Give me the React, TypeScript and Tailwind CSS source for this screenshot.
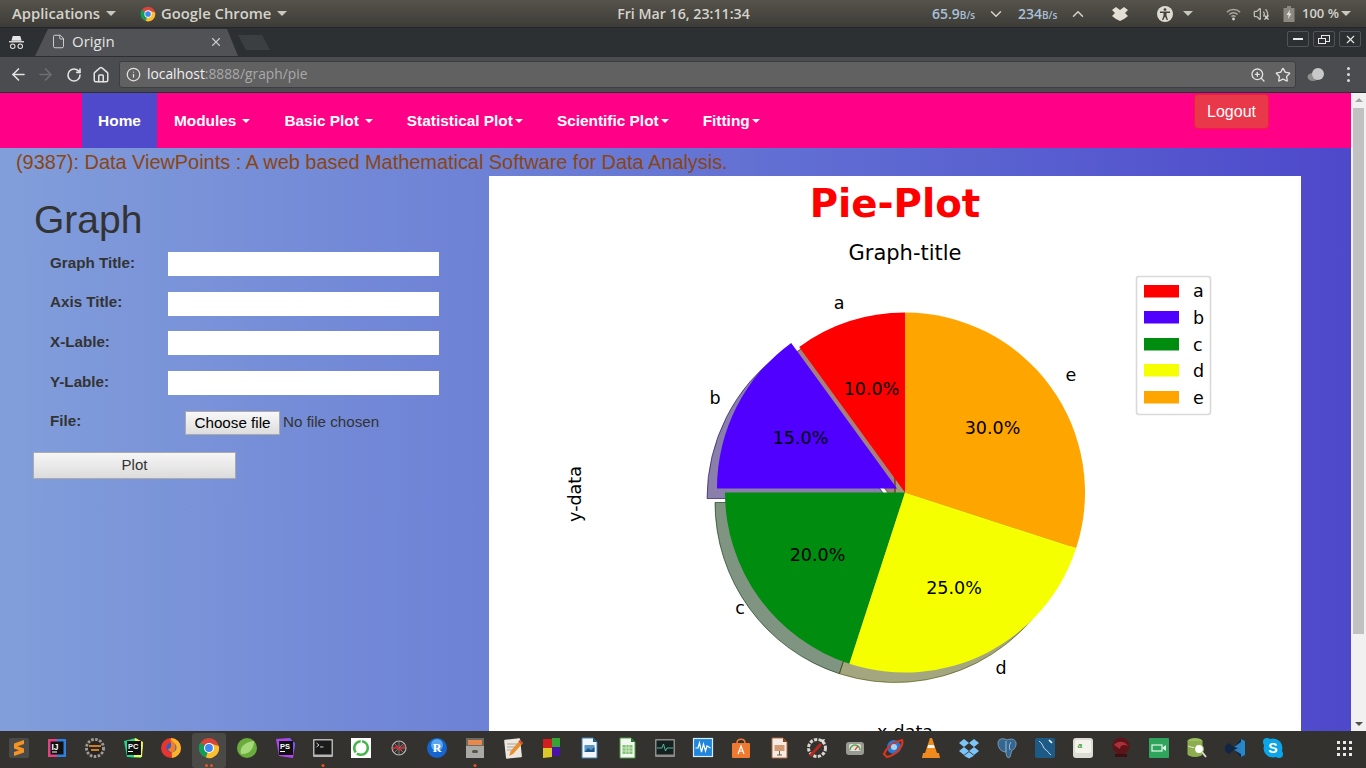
import type { ReactNode } from "react";
import { ArrowLeft, ArrowRight, ChevronDown, ChevronUp, File, Home, Info, RotateCw, Star, Volume2, X, ZoomIn } from "lucide-react";

const navItems = [
	{ label: "Modules", caret: "ml-[6px]" },
	{ label: "Basic Plot", caret: "ml-[6px]" },
	{ label: "Statistical Plot", caret: "ml-[2px]" },
	{ label: "Scientific Plot", caret: "ml-[2px]" },
	{ label: "Fitting", caret: "ml-[2px]" },
];

const formRows = ["Graph Title:", "Axis Title:", "X-Lable:", "Y-Lable:"];

const slices = [
	{ name: "a", color: "#ff0000", from: 90, to: 126, cx: 905, cy: 492.5 },
	{ name: "b", color: "#5000ff", from: 126, to: 180, cx: 897, cy: 488.5 },
	{ name: "c", color: "#008c0e", from: 180, to: 252, cx: 905, cy: 492.5 },
	{ name: "d", color: "#f6ff00", from: 252, to: 342, cx: 905, cy: 492.5 },
	{ name: "e", color: "#ffa500", from: 342, to: 450, cx: 905, cy: 492.5 },
];

const shadows: Record<string, string> = {
	a: "#4d0000",
	b: "#140055",
	c: "#002a04",
	d: "#4a4d00",
	e: "#4d3200",
};

const outerLabels = [
	{ t: "a", x: 839, y: 303 },
	{ t: "b", x: 715, y: 398 },
	{ t: "c", x: 740, y: 608 },
	{ t: "d", x: 1001, y: 668 },
	{ t: "e", x: 1071, y: 375 },
];

const percentLabels = [
	{ t: "10.0%", x: 871.5, y: 389 },
	{ t: "15.0%", x: 800.5, y: 438 },
	{ t: "20.0%", x: 817.5, y: 555 },
	{ t: "25.0%", x: 954, y: 588 },
	{ t: "30.0%", x: 992.5, y: 428 },
];

const legendRows = [
	{ t: "a", color: "#ff0000", y: 285, ty: 291 },
	{ t: "b", color: "#5000ff", y: 311, ty: 318 },
	{ t: "c", color: "#008c0e", y: 338, ty: 345 },
	{ t: "d", color: "#f6ff00", y: 364, ty: 371 },
	{ t: "e", color: "#ffa500", y: 391, ty: 398 },
];

function wedge(cx: number, cy: number, r: number, from: number, to: number) {
	const a = (from * Math.PI) / 180;
	const b = (to * Math.PI) / 180;
	const large = to - from > 180 ? 1 : 0;
	return `M${cx} ${cy}L${cx + r * Math.cos(a)} ${cy - r * Math.sin(a)}A${r} ${r} 0 ${large} 0 ${cx + r * Math.cos(b)} ${cy - r * Math.sin(b)}Z`;
}

const PieChart = () => (
	<svg viewBox="489 230 812 510" width={812} height={510} className="block font-['DejaVu_Sans',sans-serif]">
		<text x={905} y={253} textAnchor="middle" dominantBaseline="central" fontSize={21}>
			Graph-title
		</text>
		{slices.map((s) => (
			<path key={s.name} d={wedge(s.cx - 10, s.cy + 10, 180, s.from, s.to)} fill={shadows[s.name]} stroke={shadows[s.name]} fillOpacity={0.5} strokeOpacity={0.6} />
		))}
		{slices.map((s) => (
			<path key={s.name} d={wedge(s.cx, s.cy, 180, s.from, s.to)} fill={s.color} />
		))}
		{[...outerLabels, ...percentLabels].map((l) => (
			<text key={l.t} x={l.x} y={l.y} textAnchor="middle" dominantBaseline="central" fontSize={17.5}>
				{l.t}
			</text>
		))}
		<text x={575} y={494} textAnchor="middle" dominantBaseline="central" fontSize={17.5} transform="rotate(-90 575 494)">
			y-data
		</text>
		<text x={905} y={732} textAnchor="middle" dominantBaseline="central" fontSize={17.5}>
			x-data
		</text>
		<rect x={1136.5} y={276.5} width={74} height={138} rx={2.5} fill="#fff" stroke="#d9d9d9" strokeWidth={1.6} />
		{legendRows.map((l) => (
			<g key={l.t}>
				<rect x={1144} y={l.y} width={35} height={12.5} fill={l.color} />
				<text x={1193} y={l.ty} dominantBaseline="central" fontSize={17.5}>
					{l.t}
				</text>
			</g>
		))}
	</svg>
);

const ChromeLogo = ({ size }: { size: number }) => (
	<svg viewBox="0 0 22 22" width={size} height={size}>
		<circle cx={11} cy={11} r={10} fill="#db4437" />
		<path d="M11 11L2.3 6A10 10 0 0 0 8 20.5Z" fill="#0f9d58" />
		<path d="M11 11L8 20.6A10 10 0 0 0 20.8 8.9L11 6Z" fill="#fbc02d" />
		<path d="M11 11L2.3 16A10 10 0 0 1 2.3 6Z" fill="#0f9d58" />
		<circle cx={11} cy={11} r={5} fill="#fff" />
		<circle cx={11} cy={11} r={3.9} fill="#4285f4" />
	</svg>
);

const Caret = ({ className }: { className: string }) => (
	<span className={`inline-block h-0 w-0 border-x-[5px] border-t-[5px] border-x-transparent ${className}`} />
);

const TopBar = () => (
	<div className="flex h-[27px] shrink-0 items-center bg-gradient-to-b from-[#55534b] to-[#3d3c37] font-['Open_Sans',sans-serif] text-[14.8px] font-semibold text-[#d5d3cc]">
		<div className="flex flex-1 items-center pl-3">
			<span>Applications</span>
			<Caret className="ml-[6px] border-t-[#c9c7c0]" />
			<span className="ml-[24px] flex items-center">
				<ChromeLogo size={16} />
			</span>
			<span className="ml-[5px]">Google Chrome</span>
			<Caret className="ml-[6px] border-t-[#c9c7c0]" />
		</div>
		<span className="ml-[4px] text-[14.2px]">Fri Mar 16, 23:11:34</span>
		<div className="flex flex-1 items-center justify-end pr-[15px]">
			<span className="w-[43px] text-[14px] whitespace-nowrap text-[#a9c0d8]">
				65.9<span className="text-[10px]">B/s</span>
			</span>
			<ChevronDown size={18} className="ml-[12px] text-[#d5d3cc]" />
			<span className="ml-[13px] w-[39px] text-[14px] whitespace-nowrap text-[#a9c0d8]">
				234<span className="text-[10px]">B/s</span>
			</span>
			<ChevronUp size={18} className="ml-[12px] text-[#d5d3cc]" />
			<svg viewBox="0 0 16 14" width={16} height={14} className="ml-[25px]">
				<path d="M4 0L8 3L12 0L16 3L13 6L16 9L12 12L8 14L4 12L0 9L3 6L0 3Z" fill="#e3dfd4" />
			</svg>
			<svg viewBox="0 0 16 16" width={16} height={16} className="ml-[29px]">
				<circle cx={8} cy={8} r={8} fill="#dedbd3" />
				<circle cx={8} cy={3.6} r={1.4} fill="#45433d" />
				<path d="M3 5.5H13V7H9.5V9.5L11 14H9.7L8 10.5L6.3 14H5L6.5 9.5V7H3Z" fill="#45433d" />
			</svg>
			<Caret className="ml-[10px] border-t-[#c9c7c0]" />
			<svg viewBox="0 0 16 14" width={15} height={14} className="ml-[33px]">
				<path d="M1 5A10 10 0 0 1 15 5M3.5 7.5A6.5 6.5 0 0 1 12.5 7.5M5.8 9.8A3.2 3.2 0 0 1 10.2 9.8" fill="none" stroke="#a8a69f" strokeWidth={1.5} />
				<circle cx={8} cy={12.3} r={1.5} fill="#d5d3cc" />
			</svg>
			<span className="relative ml-[12px] flex">
				<Volume2 size={16} className="text-[#bdbbb4]" />
				<X size={7} strokeWidth={4} className="absolute bottom-[1px] right-[-1px] text-[#d5d3cc]" />
			</span>
			<svg viewBox="0 0 12 16" width={12} height={16} className="ml-[14px]">
				<path d="M4 0H8V2H11.5V16H0.5V2H4Z" fill="#8a8880" />
				<path d="M7 3.5L3.5 9H5.7L5 13L8.5 7.5H6.3Z" fill="#e8e6de" />
			</svg>
			<span className="ml-[7px] w-[39px] text-[13px] whitespace-nowrap">100 %</span>
			<Caret className="border-t-[#c9c7c0]" />
		</div>
	</div>
);

const WinButton = ({ children }: { children: ReactNode }) => (
	<span className="flex h-[16px] w-[22px] items-center justify-center rounded-[2px] border border-[#50545a] text-[#e8e8e8]">{children}</span>
);

const TabStrip = () => (
	<div className="flex h-[29px] shrink-0 items-end border-t border-[#23262a] bg-[#2d3033]">
		<span className="flex h-full w-[35px] items-center justify-center pr-[3px]">
			<svg viewBox="0 0 18 16" width={17} height={15}>
				<path d="M5 1H13L14.5 6H3.5Z" fill="#e6e6e6" />
				<rect x={1} y={6.5} width={16} height={1.4} fill="#e6e6e6" />
				<circle cx={5} cy={12} r={2.4} fill="none" stroke="#e6e6e6" strokeWidth={1.1} />
				<circle cx={13} cy={12} r={2.4} fill="none" stroke="#e6e6e6" strokeWidth={1.1} />
			</svg>
		</span>
		<div className="flex h-[27px] w-[203px] items-center bg-[#505255] pb-[2px] pl-[17px] pr-[16px] [clip-path:polygon(0_100%,13px_0,192px_0,100%_100%)]">
			<File size={15} strokeWidth={1.4} className="ml-[-1px] text-[#dedede]" />
			<span className="ml-[6px] font-['Open_Sans',sans-serif] text-[15px] text-[#e4e4e4]">Origin</span>
			<X size={14} className="ml-auto mr-[-1px] text-[#c9c9c9]" />
		</div>
		<span className="mb-[6px] h-[15px] w-[32px] bg-[#3c3f42] [clip-path:polygon(0_0,24px_0,100%_100%,8px_100%)]" />
		<div className="mb-[9px] ml-auto mr-[5px] flex gap-[4px]">
			<WinButton>
				<span className="h-[2px] w-[10px] bg-[#e8e8e8]" />
			</WinButton>
			<WinButton>
				<span className="relative block h-[9px] w-[12px]">
					<span className="absolute right-0 top-0 h-[7px] w-[9px] border border-[#e8e8e8]" />
					<span className="absolute bottom-0 left-0 h-[6px] w-[8px] border border-[#e8e8e8] bg-[#2d3033]" />
				</span>
			</WinButton>
			<WinButton>
				<X size={13} />
			</WinButton>
		</div>
	</div>
);

const Toolbar = () => (
	<div className="flex h-[37px] shrink-0 items-center border-y border-[#2c2e31] bg-[#4a4c4f] pl-[9px] pr-[16px] text-[#e2e2e2]">
		<ArrowLeft size={19} />
		<ArrowRight size={19} className="ml-[8px] text-[#6d6f72]" />
		<RotateCw size={16} className="ml-[11px]" strokeWidth={2.4} />
		<Home size={18} className="ml-[10px]" />
		<div className="ml-[9px] flex h-[27px] w-[1177px] items-center rounded-[3px] border border-[#3c3e41] bg-[#616161] pl-[6px] pr-[4px]">
			<Info size={15} />
			<span className="ml-[6px] font-['Open_Sans',sans-serif] text-[13.8px] text-[#f0f0f0]">
				localhost<span className="text-[#a9a9a9]">:8888/graph/pie</span>
			</span>
			<ZoomIn size={16} className="ml-auto" />
			<Star size={16} className="ml-[9px]" />
		</div>
		<svg viewBox="0 0 18 14" width={18} height={14} className="ml-[11px]">
			<ellipse cx={6} cy={9} rx={5.5} ry={4} fill="#8e8e8e" />
			<circle cx={11} cy={6} r={6} fill="#c8c8c8" />
		</svg>
		<span className="ml-auto flex flex-col gap-[3px]">
			<span className="h-[3px] w-[3px] rounded-full bg-[#dcdcdc]" />
			<span className="h-[3px] w-[3px] rounded-full bg-[#dcdcdc]" />
			<span className="h-[3px] w-[3px] rounded-full bg-[#dcdcdc]" />
		</span>
	</div>
);

const Navbar = () => (
	<nav className="flex h-[55px] shrink-0 bg-[#ff0086] pl-[82px] font-['Liberation_Sans',sans-serif] text-[15.4px] font-bold text-white">
		<a className="flex w-[75px] items-center justify-center bg-[#4f4acb]">Home</a>
		{navItems.map((item) => (
			<a key={item.label} className="flex items-center px-[17px]">
				{item.label}
				<Caret className={`${item.caret} !border-x-[4px] !border-t-[4px] border-t-white`} />
			</a>
		))}
		<button className="ml-auto mr-[82px] mt-px h-[35px] w-[75px] rounded-[4px] border border-[#ed1f3c] bg-[#e8384a] text-[16px] font-normal text-[#fff]">Logout</button>
	</nav>
);

const GraphForm = () => (
	<div className="w-[489px] shrink-0 font-['Liberation_Sans',sans-serif] text-[#333]">
		<h2 className="ml-[34px] h-[76px] pt-[22px] text-[39px] leading-[44px]">Graph</h2>
		<div className="flex flex-col gap-[15.67px] pl-[50px]">
			{formRows.map((label) => (
				<div key={label} className="flex h-[24px] items-center">
					<label className="w-[118px] pb-[2px] text-[15.2px] font-bold">{label}</label>
					<input className="h-full w-[271px] bg-white" />
				</div>
			))}
			<div className="flex h-[24px] items-center">
				<label className="w-[135px] pb-[2px] text-[15.2px] font-bold">File:</label>
				<button className="h-[24px] w-[95px] border border-[#aaa] bg-gradient-to-b from-[#f8f8f8] to-[#ddd] text-[15.2px] text-black">Choose file</button>
				<span className="ml-[3px] text-[15.2px]">No file chosen</span>
			</div>
		</div>
		<button className="ml-[33px] mt-[17px] h-[27px] w-[203px] border border-[#aaa] bg-gradient-to-b from-[#f6f6f6] to-[#dcdcdc] text-[15px]">Plot</button>
	</div>
);

const Scrollbar = () => (
	<div className="flex w-[15px] shrink-0 flex-col items-center bg-[#f1f1f1]">
		<span className="mt-[5px] h-0 w-0 border-x-[4px] border-b-[4px] border-x-transparent border-b-[#a3a3a3]" />
		<span className="mt-[6px] h-[526px] w-[11px] bg-[#c1c1c1]" />
		<span className="mb-[5px] mt-auto h-0 w-0 border-x-[4px] border-t-[4px] border-x-transparent border-t-[#505050]" />
	</div>
);

const dockIcons: { id: string; dots?: number; art: ReactNode }[] = [
	{ id: "sublime", art: <><rect x={1} y={1} width={20} height={20} rx={2} fill="#4a4a48" /><path d="M16 3V7L6 10.5V6.5Z M6 8L16 11.5V15L6 11.5Z M16 11.5V15.5L6 19V15Z" fill="#f59324" /></> },
	{ id: "idea", art: <><rect x={2} y={2} width={18} height={18} fill="#e0447c" /><path d="M11 2H20V20H11Z" fill="#2f7fe0" /><rect x={4.5} y={4.5} width={13} height={13} fill="#111" /><text x={5.5} y={12.5} fontSize={8.5} fontWeight={700} fill="#fff" fontFamily="Liberation Sans">IJ</text><rect x={6} y={14.5} width={5} height={1} fill="#fff" /></> },
	{ id: "gear", art: <><circle cx={11} cy={11} r={8.5} fill="none" stroke="#9c9c9c" strokeWidth={3} strokeDasharray="2.5 1.5" /><circle cx={11} cy={11} r={7} fill="#2c2420" /><rect x={5} y={8} width={12} height={2} fill="#c5802b" /><rect x={7} y={12} width={8} height={2} fill="#c5802b" /></> },
	{ id: "pycharm", art: <><path d="M2 4L14 1L21 8L19 21L5 20Z" fill="#21d789" /><path d="M13 1L21 5L20 20L12 20Z" fill="#fcf84a" /><rect x={5} y={4} width={14} height={14} fill="#111" /><text x={6} y={11.5} fontSize={7.5} fontWeight={700} fill="#fff" fontFamily="Liberation Sans">PC</text><rect x={6} y={14} width={5} height={1} fill="#fff" /></> },
	{ id: "firefox", art: <><circle cx={11} cy={11} r={10} fill="#e8352d" /><path d="M11 1A10 10 0 0 1 21 11A10 10 0 0 1 12 21Z" fill="#fbb32c" /><circle cx={11.5} cy={10.5} r={5} fill="#2b5fd0" /><path d="M10 2C14 5 17 8 15 13C13 17 9 15 8 12C11 12 12 9 10 2Z" fill="#f57c1f" /></> },
	{ id: "chrome", dots: 2, art: <ChromeLogo size={22} /> },
	{ id: "spring", art: <><circle cx={11} cy={11} r={10} fill="#6aad3d" /><path d="M5 17C3 10 9 5 18 4C18 12 13 18 5 17Z" fill="#a6d97a" /></> },
	{ id: "phpstorm", art: <><path d="M2 2L16 1L21 7L19 21L5 19Z" fill="#b345f1" /><path d="M14 1L21 6L20 14L13 8Z" fill="#765af8" /><rect x={5} y={4} width={14} height={14} fill="#111" /><text x={6} y={11.5} fontSize={7.5} fontWeight={700} fill="#fff" fontFamily="Liberation Sans">PS</text><rect x={6} y={14} width={5} height={1} fill="#fff" /></> },
	{ id: "terminal", dots: 1, art: <><rect x={1} y={2} width={20} height={18} rx={1} fill="#b5b5b5" /><rect x={2.5} y={3.5} width={17} height={14} fill="#1b1b1b" /><path d="M4.5 6L7 8L4.5 10" fill="none" stroke="#ddd" strokeWidth={0.9} /><rect x={8} y={9.5} width={3.5} height={0.9} fill="#ddd" /></> },
	{ id: "ring", art: <><rect x={1} y={1} width={20} height={20} fill="#fff" /><circle cx={11} cy={11} r={6.8} fill="none" stroke="#43b649" strokeWidth={2.6} strokeDasharray="15 1.5" /></> },
	{ id: "web", art: <><circle cx={11} cy={11} r={7} fill="none" stroke="#b8b8b8" strokeWidth={1.1} /><path d="M4 11H18M11 4V18M6 6L16 16M16 6L6 16" stroke="#9c9c9c" strokeWidth={0.7} /><path d="M5 12L9 9L12 13L17 8" fill="none" stroke="#d6262f" strokeWidth={1.6} /></> },
	{ id: "r", art: <><circle cx={11} cy={11} r={10} fill="#1565d0" /><circle cx={11} cy={8} r={6} fill="#5aa7ef" /><text x={11} y={15} textAnchor="middle" fontSize={12} fontWeight={700} fill="#fff" fontFamily="Liberation Serif">R</text></> },
	{ id: "files", dots: 1, art: <><rect x={2} y={1} width={18} height={9} fill="#6f6a62" /><rect x={4} y={3} width={14} height={5} fill="#e5894f" /><rect x={2} y={9} width={18} height={12} fill="#a9a9a6" /><rect x={8} y={13} width={6} height={3} rx={1.5} fill="#57544e" /></> },
	{ id: "notepad", art: <><rect x={3} y={2} width={16} height={19} rx={1} transform="rotate(-6 11 11)" fill="#ece8df" /><path d="M5 7H15M5 10H13M5 13H11" stroke="#a9a59c" /><path d="M18 3L21 6L11 17L7 19L8.5 14.5Z" fill="#e8902e" /><path d="M18 3L21 6L19.5 7.5L16.5 4.5Z" fill="#d9433d" /></> },
	{ id: "blocks", art: <><rect x={3} y={2} width={9} height={9} fill="#d11f1f" /><rect x={12} y={1} width={8} height={9} fill="#33a532" /><path d="M3 11H12V20L3 21Z" fill="#d9c92a" /><rect x={12} y={10} width={8} height={9} fill="#4a12a8" /></> },
	{ id: "writer", art: <><path d="M4 1H15L19 5V21H4Z" fill="#f3f5f7" stroke="#3d7fb5" /><path d="M15 1L19 5H15Z" fill="#1c5a8c" /><rect x={6.5} y={8} width={10} height={7} fill="#5a95c4" /><path d="M6.5 15L10 11L13 13L16.5 10V15Z" fill="#1c5a8c" /></> },
	{ id: "calc", art: <><path d="M4 1H15L19 5V21H4Z" fill="#f3f7f1" stroke="#4c9d3f" /><path d="M15 1L19 5H15Z" fill="#1d7a2a" /><rect x={6.5} y={8} width={10} height={9} fill="#7fc46f" /><path d="M6.5 11H16.5M6.5 14H16.5M10 8V17M13 8V17" stroke="#f3f7f1" strokeWidth={0.7} /></> },
	{ id: "monitor", art: <><rect x={1} y={2} width={20} height={18} rx={1} fill="#8c8c8c" /><rect x={2.5} y={3.5} width={17} height={14} fill="#15201f" /><path d="M3 11H8L9.5 7L11.5 14L13 11H19" fill="none" stroke="#54c7a6" strokeWidth={0.9} /></> },
	{ id: "usage", art: <><rect x={1.5} y={1.5} width={19} height={18} fill="#1f86dc" stroke="#d8edfb" strokeWidth={1.2} /><path d="M3.5 11L6 11L7.5 6L9.5 15L11.5 7L13.5 14L15 9L18.5 11" fill="none" stroke="#fff" strokeWidth={1.2} /></> },
	{ id: "store", art: <><rect x={2} y={6} width={18} height={15} rx={1} fill="#ee7a32" /><path d="M7 6C7 1 15 1 15 6" fill="none" stroke="#ee7a32" strokeWidth={1.6} /><path d="M8 17L11 9L14 17M9.5 14H12.5" fill="none" stroke="#fff" strokeWidth={1.2} /></> },
	{ id: "impress", art: <><path d="M4 1H15L19 5V21H4Z" fill="#f5ece6" stroke="#b3633a" /><path d="M15 1L19 5H15Z" fill="#8e3b17" /><rect x={6.5} y={8} width={10} height={6} fill="#d49a74" /><path d="M11.5 14V18M9 18H14" stroke="#7a5a45" /></> },
	{ id: "tools", art: <><circle cx={11} cy={11} r={8.5} fill="none" stroke="#d9d6d0" strokeWidth={3} strokeDasharray="3.2 1.4" /><path d="M4 19L15 7" stroke="#b52820" strokeWidth={3} /><path d="M14 3L19 2L17 7" fill="#e4e1db" /></> },
	{ id: "disk", art: <><rect x={2} y={5} width={18} height={13} rx={3} fill="#9a9a94" /><rect x={5} y={7} width={12} height={7} rx={2} fill="#e3e3dd" /><path d="M6 13A5 5 0 0 1 16 13" fill="none" stroke="#5ba34a" strokeWidth={1.5} /><path d="M11 13L14 9" stroke="#c9352a" strokeWidth={1.2} /></> },
	{ id: "swirl", art: <><circle cx={12} cy={10} r={7} fill="#2a78d2" /><path d="M2 17C5 10 12 5 20 3C22 8 15 18 5 20Z" fill="none" stroke="#d8341f" strokeWidth={2.2} /><circle cx={12} cy={10} r={3} fill="#a9d3f5" /></> },
	{ id: "vlc", art: <><path d="M10 1H12L17 16H5Z" fill="#f08a1a" /><path d="M8.2 8H13.8L14.8 11H7.2Z" fill="#f5f5f5" /><path d="M3 16H19L20 21H2Z" fill="#ee8a1e" /></> },
	{ id: "dropbox", art: <path d="M6 2L11 6L6 10L1 6ZM16 2L21 6L16 10L11 6ZM6 10L11 14L6 18L1 14ZM16 10L21 14L16 18L11 14ZM6 18.8L11 15L16 18.8L11 21.5Z" fill="#7cc4f7" /> },
	{ id: "postgres", art: <><path d="M2 6C2 1 8 1 11 3C15 1 21 2 20 8C19 12 17 13 16 13L14 20C12 22 10 20 10 15C5 15 2 11 2 6Z" fill="#336791" stroke="#a9c3d8" strokeWidth={0.6} /><path d="M10 4V15M15 5C13 8 13 10 14 13" stroke="#c7d9e6" strokeWidth={0.7} fill="none" /></> },
	{ id: "workbench", art: <><rect x={1} y={1} width={20} height={20} rx={2} fill="#1d5a86" /><path d="M5 4C9 6 9 12 12 13C14 14 15 17 17 18" fill="none" stroke="#c3dcec" strokeWidth={1} /><path d="M15 3L18 6" stroke="#fff" strokeWidth={1.6} /></> },
	{ id: "keycap", art: <><rect x={1} y={1} width={20} height={20} rx={3} fill="#dcdcd4" /><rect x={3} y={3} width={16} height={13} rx={2} fill="#f3f3ec" /><text x={8} y={11} textAnchor="middle" fontSize={8} fontWeight={700} fontStyle="italic" fill="#3f9b35" fontFamily="Liberation Sans">a</text></> },
	{ id: "redcam", art: <><circle cx={11} cy={9} r={8.5} fill="#5c1418" /><path d="M4 8C8 3 15 4 18 9C14 7 10 8 10 12Z" fill="#a8323a" /><path d="M5 17H17V20H5Z" fill="#3d0f12" /></> },
	{ id: "meet", art: <><rect x={1} y={1} width={20} height={20} rx={1} fill="#2ea45c" /><rect x={4} y={8} width={10} height={6} fill="none" stroke="#e5f5ea" strokeWidth={1.2} /><path d="M14 11L18 8V14Z" fill="#e5f5ea" /></> },
	{ id: "dbsearch", art: <><ellipse cx={9} cy={4} rx={7.5} ry={3} fill="#9bbf5b" /><rect x={1.5} y={4} width={15} height={13} fill="#8cae4f" /><ellipse cx={9} cy={17} rx={7.5} ry={3} fill="#8cae4f" /><path d="M2 9C6 11 12 11 16 9" fill="none" stroke="#e8f0d6" /><circle cx={13} cy={12} r={4.5} fill="#fff" stroke="#8cae4f" strokeWidth={1.2} /><path d="M16 15L20 20" stroke="#d9d9c8" strokeWidth={2} /></> },
	{ id: "vscode", art: <><path d="M1 9L5 6L10 10L17 2L21 4V18L17 20L10 13L5 17L1 14Z" fill="#0f2744" /><path d="M17 2L21 4V18L17 20Z" fill="#2489ca" /><path d="M10 10L17 5V17L10 13L14 11Z" fill="#2f7fc1" /></> },
	{ id: "skype", art: <><circle cx={11} cy={11} r={9.5} fill="#0ca5e8" /><circle cx={5} cy={5} r={4} fill="#0ca5e8" /><circle cx={17} cy={17} r={4} fill="#0ca5e8" /><text x={11} y={16} textAnchor="middle" fontSize={14} fontWeight={700} fill="#fff" fontFamily="Liberation Sans">S</text></> },
];

const Dock = () => (
	<div className="flex h-[37px] shrink-0 items-center bg-[#33322e] pr-[14px]">
		{dockIcons.map((icon) => (
			<span key={icon.id} className="relative flex h-full w-[38px] items-center justify-center">
				{icon.id === "chrome" ? <span className="absolute inset-x-[2px] bottom-0 top-[2px] rounded-[3px] bg-[#4a4946]" /> : null}
				<svg viewBox="0 0 22 22" width={22} height={22} className="relative mb-[3px]">
					{icon.art}
				</svg>
				{icon.dots ? (
					<span className="absolute bottom-[1px] left-1/2 flex -translate-x-1/2 gap-[2px]">
						{Array.from({ length: icon.dots }).map((_, i) => (
							<span key={i} className="h-[3px] w-[3px] rounded-full bg-[#e95420]" />
						))}
					</span>
				) : null}
			</span>
		))}
		<span className="ml-auto mb-[3px] grid grid-cols-3 gap-[3px]">
			{Array.from({ length: 9 }).map((_, i) => (
				<span key={i} className="h-[3px] w-[3px] bg-[#e8e8e8]" />
			))}
		</span>
	</div>
);

export default function App() {
	return (
		<div className="flex h-screen w-full flex-col overflow-hidden">
			<TopBar />
			<TabStrip />
			<Toolbar />
			<div className="flex min-h-0 flex-1">
				<main className="flex min-w-0 flex-1 flex-col overflow-hidden">
					<Navbar />
					<div className="min-h-0 flex-1 bg-gradient-to-r from-[#829eda] to-[#4e48cb]">
						<p className="h-[28px] pl-4 font-['Liberation_Sans',sans-serif] text-[19.9px] leading-[28px] text-[#8b4513]">
							(9387): Data ViewPoints : A web based Mathematical Software for Data Analysis.
						</p>
						<div className="flex">
							<GraphForm />
							<section className="w-[812px] shrink-0 bg-white">
								<h1 className="h-[54px] text-center font-['DejaVu_Sans',sans-serif] text-[38.7px] font-bold leading-[56px] text-[#ff0000]">Pie-Plot</h1>
								<PieChart />
							</section>
						</div>
					</div>
				</main>
				<Scrollbar />
			</div>
			<Dock />
		</div>
	);
}
